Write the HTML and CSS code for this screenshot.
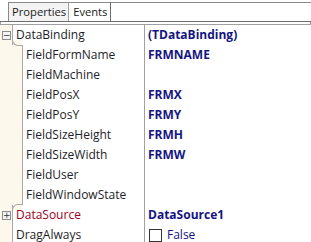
FILE: index.html
```html
<!DOCTYPE html>
<html>
<head>
<meta charset="utf-8">
<link rel="stylesheet" href="styles.css">
</head>
<body>
<div class="tabs">
  <div class="tab active">Properties</div>
  <div class="tab">Events</div>
  <div class="fill"></div>
</div>
<div class="grid">
  <div class="row">
    <div class="gut"><span class="box">&minus;</span></div>
    <div class="name">DataBinding</div>
    <div class="val">(TDataBinding)</div>
  </div>
  <div class="group">
    <div class="row child"><div class="gut"></div><div class="name">FieldFormName</div><div class="val">FRMNAME</div></div>
    <div class="row child"><div class="gut"></div><div class="name">FieldMachine</div><div class="val"></div></div>
    <div class="row child"><div class="gut"></div><div class="name">FieldPosX</div><div class="val">FRMX</div></div>
    <div class="row child"><div class="gut"></div><div class="name">FieldPosY</div><div class="val">FRMY</div></div>
    <div class="row child"><div class="gut"></div><div class="name">FieldSizeHeight</div><div class="val">FRMH</div></div>
    <div class="row child"><div class="gut"></div><div class="name">FieldSizeWidth</div><div class="val">FRMW</div></div>
    <div class="row child"><div class="gut"></div><div class="name">FieldUser</div><div class="val"></div></div>
    <div class="row child"><div class="gut"></div><div class="name">FieldWindowState</div><div class="val"></div></div>
  </div>
  <div class="row">
    <div class="gut"><span class="box">+</span></div>
    <div class="name red">DataSource</div>
    <div class="val">DataSource1</div>
  </div>
  <div class="row">
    <div class="gut"></div>
    <div class="name">DragAlways</div>
    <div class="val normal"><span class="check"></span>False</div>
  </div>
</div>
</body>
</html>
```
FILE: styles.css
```css
html, body { margin: 0; padding: 0; background: #fff; }
body {
  font-family: "Open Sans", "Noto Sans", sans-serif;
  font-size: 12px;
  color: #1e1e2a;
  width: 311px;
  height: 242px;
  overflow: hidden;
}
.tabs {
  display: flex;
  height: 19px;
  margin-top: 2px;
  padding-left: 8px;
  border-bottom: 1px solid #6d6d6d;
  box-shadow: 0 3px 0 -1px #fff, 0 3px 0 0 #a0a0a0;
}
.tab {
  padding: 0 2px 0 3px;
  line-height: 18px;
  border-top: 1px solid #8a8a8a;
  color: #1b1b1b;
  font-size: 11.2px;
}
.tab.active {
  background: #f3f3f3;
  border-left: 1px solid #8a8a8a;
  border-right: 1px solid #a0a0a0;
}
.tab + .tab { border-right: 1px solid #6d6d6d; padding: 0 3px 0 4px; }
.fill { flex: 1; border-top: 1px solid #8a8a8a; }
.grid {
  margin-top: 3px;
  background: #fff;
}
.row {
  display: flex;
  height: 20px;
  line-height: 20px;
}
.gut {
  width: 12px;
  flex: none;
  display: flex;
  align-items: center;
  justify-content: center;
  background: #fdf8ec;
}
.box {
  width: 7px;
  height: 7px;
  border: 1px solid #8c8c8c;
  background: #f4f4f4;
  font-size: 9px;
  line-height: 7px;
  text-align: center;
  color: #333;
  font-family: "DejaVu Sans", sans-serif;
  margin-left: 1px;
}
.name {
  width: 133px;
  flex: none;
  padding-left: 3px;
  box-sizing: border-box;
  border-left: 1px solid #a8a8a8;
  border-right: 1px solid #a0a0a0;
}
.child .gut { width: 22px; }
.child .name { width: 123px; }
.red { color: #a1001b; }
.val {
  flex: 1;
  padding-left: 3px;
  font-weight: bold;
  color: #141483;
}
.val.normal { font-weight: normal; display: flex; align-items: center; gap: 5px; }
.check {
  width: 13px;
  height: 13px;
  border: 1px solid #333;
  box-sizing: border-box;
  margin-left: 1px;
}
.group { position: relative; }
.group::before, .group::after {
  content: "";
  position: absolute;
  left: 12px;
  width: 9px;
  height: 5px;
  border-left: 1px solid #a8a8a8;
  background: #fdf8ec;
}
.group::before {
  top: -5px;
  border-bottom: 1px solid #a8a8a8;
  border-bottom-left-radius: 6px;
}
.group::after {
  bottom: -5px;
  border-top: 1px solid #a8a8a8;
  border-top-left-radius: 6px;
}
.group .row:first-child .name { border-top-left-radius: 0; }
```
